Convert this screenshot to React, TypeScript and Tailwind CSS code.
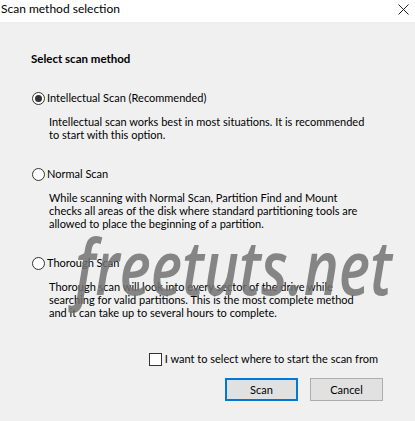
import React from 'react';

function Radio({ checked }: { checked?: boolean }) {
  return (
    <span className="w-[13px] h-[13px] rounded-full border border-[#333] bg-white flex items-center justify-center shrink-0">
      {checked && <span className="w-[7px] h-[7px] rounded-full bg-[#333]" />}
    </span>
  );
}

function Option({
  label,
  checked,
  lines,
  className,
}: {
  label: string;
  checked?: boolean;
  lines: string[];
  className?: string;
}) {
  return (
    <div className={className}>
      <div className="flex items-center h-[16px] ml-[1px]">
        <Radio checked={checked} />
        <span className="ml-[2px]">{label}</span>
      </div>
      <div className="ml-[18px] mt-[9px] leading-[13px] whitespace-nowrap">
        {lines.map((l) => (
          <div key={l}>{l}</div>
        ))}
      </div>
    </div>
  );
}

export default function App() {
  return (
    <div
      className="relative w-[415px] h-[421px] bg-[#f0f0f0] text-black text-[11px] overflow-hidden"
      style={{ fontFamily: 'Lato, sans-serif' }}
    >
      <div className="h-[22px] bg-white flex items-center justify-between text-[12px]">
        <span className="pl-[1px] leading-[16px] -mt-[4px]">Scan method selection</span>
        <svg width="11" height="11" viewBox="0 0 11 11" className="mr-[6px] -mt-[4px]">
          <path d="M0.5 0.5 L10.5 10.5 M10.5 0.5 L0.5 10.5" stroke="#222" strokeWidth="1" />
        </svg>
      </div>

      <div className="pt-[29px] pl-[31px] pr-[32px]">
        <h1 className="text-[11.5px] font-bold leading-[16px]">Select scan method</h1>

        <Option
          className="mt-[23px]"
          checked
          label="Intellectual Scan (Recommended)"
          lines={[
            'Intellectual scan works best in most situations. It is recommended',
            'to start with this option.',
          ]}
        />
        <Option
          className="mt-[25px]"
          label="Normal Scan"
          lines={[
            'While scanning with Normal Scan, Partition Find and Mount',
            'checks all areas of the disk where standard partitioning tools are',
            'allowed to place the beginning of a partition.',
          ]}
        />
        <Option
          className="mt-[25px]"
          label="Thorough Scan"
          lines={[
            'Thorough scan will look into every sector of the drive while',
            'searching for valid partitions. This is the most complete method',
            'and it can take up to several hours to complete.',
          ]}
        />

        <div className="mt-[32px] flex justify-end pr-[5px]">
          <label className="flex items-center h-[16px]">
            <span className="w-[13px] h-[13px] border border-[#333] bg-white shrink-0" />
            <span className="ml-[3px]">I want to select where to start the scan from</span>
          </label>
        </div>

        <div className="mt-[11px] flex justify-end gap-[12px]">
          <button className="w-[73px] h-[23px] bg-[#e1e1e1] border-2 border-[#0078d7] leading-none">
            Scan
          </button>
          <button className="w-[73px] h-[23px] bg-[#e1e1e1] border border-[#adadad] leading-none">
            Cancel
          </button>
        </div>
      </div>

      <div
        className="absolute left-[75px] top-[228px] text-[76px] leading-none italic font-semibold text-[#727272]/85 origin-left scale-x-[0.78] pointer-events-none select-none"
        style={{ fontFamily: '"Open Sans", sans-serif' }}
      >
        freetuts.net
      </div>
    </div>
  );
}
